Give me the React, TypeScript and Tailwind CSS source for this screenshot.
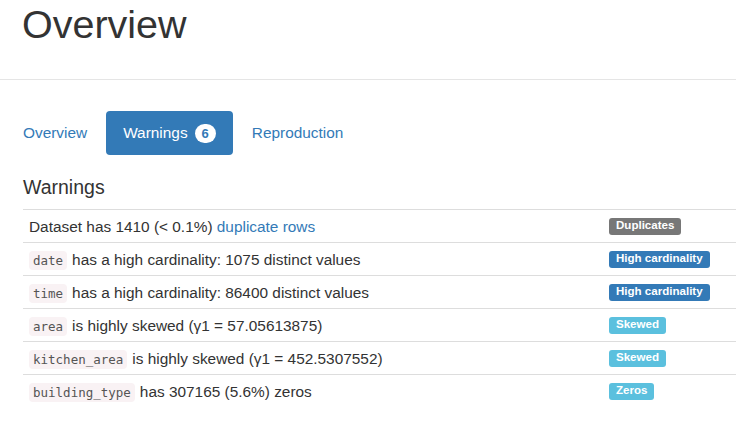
import React from "react";

type Warning = {
  code?: string;
  text: React.ReactNode;
  label: string;
  tone: "default" | "primary" | "info";
};

const warnings: Warning[] = [
  {
    text: (
      <>
        Dataset has 1410 (&lt; 0.1%){" "}
        <a href="#" className="text-[#337ab7]">
          duplicate rows
        </a>
      </>
    ),
    label: "Duplicates",
    tone: "default",
  },
  { code: "date", text: "has a high cardinality: 1075 distinct values", label: "High cardinality", tone: "primary" },
  { code: "time", text: "has a high cardinality: 86400 distinct values", label: "High cardinality", tone: "primary" },
  { code: "area", text: "is highly skewed (γ1 = 57.05613875)", label: "Skewed", tone: "info" },
  { code: "kitchen_area", text: "is highly skewed (γ1 = 452.5307552)", label: "Skewed", tone: "info" },
  { code: "building_type", text: "has 307165 (5.6%) zeros", label: "Zeros", tone: "info" },
];

const toneClass = {
  default: "bg-[#777777]",
  primary: "bg-[#337ab7]",
  info: "bg-[#5bc0de]",
};

export default function App() {
  return (
    <div className="min-h-[431px] w-[736px] overflow-hidden bg-white font-['Liberation_Sans',Arial,sans-serif] text-[15.4px] text-[#333]">
      <div className="pl-[22px] pt-[3px]">
        <h1 className="h-[44px] text-[39.5px] font-normal leading-[1.1] text-[#333]">Overview</h1>
      </div>
      <hr className="mt-[32px] border-t border-[#e5e5e5]" />

      <ul className="mt-[31px] flex gap-[2px] pl-[6px]">
        <li>
          <a href="#" className="block rounded-[4px] px-[17px] py-[11px] leading-[22px] text-[#337ab7]">
            Overview
          </a>
        </li>
        <li>
          <a href="#" className="flex items-center gap-[7px] rounded-[4px] bg-[#337ab7] px-[17px] py-[11px] leading-[22px] text-white">
            Warnings
            <span className="inline-block rounded-[11px] bg-white px-[7px] py-[3px] text-[13px] font-bold leading-[13px] text-[#337ab7]">
              6
            </span>
          </a>
        </li>
        <li>
          <a href="#" className="block rounded-[4px] px-[17px] py-[11px] leading-[22px] text-[#337ab7]">
            Reproduction
          </a>
        </li>
      </ul>

      <div className="pl-[23px]">
        <h4 className="mt-[22px] text-[19.5px] font-normal leading-[1.1] text-[#333]">Warnings</h4>
        <div className="mt-[11px]">
          {warnings.map((w, i) => (
            <div key={i} className="flex h-[33px] items-center border-t border-[#dddddd]">
              <div className="w-[586px] pl-[6px]">
                {w.code && (
                  <code className="mr-[5px] rounded-[4px] bg-[#f9f2f4] px-[4px] py-[2px] font-['DejaVu_Sans_Mono',monospace] text-[12.5px] text-[#555]">
                    {w.code}
                  </code>
                )}
                {w.text}
              </div>
              <span
                className={`inline-block rounded-[3px] px-[7px] pb-[3.5px] pt-[2.5px] text-[11.55px] font-bold leading-none text-white ${toneClass[w.tone]}`}
              >
                {w.label}
              </span>
            </div>
          ))}
        </div>
      </div>
    </div>
  );
}
